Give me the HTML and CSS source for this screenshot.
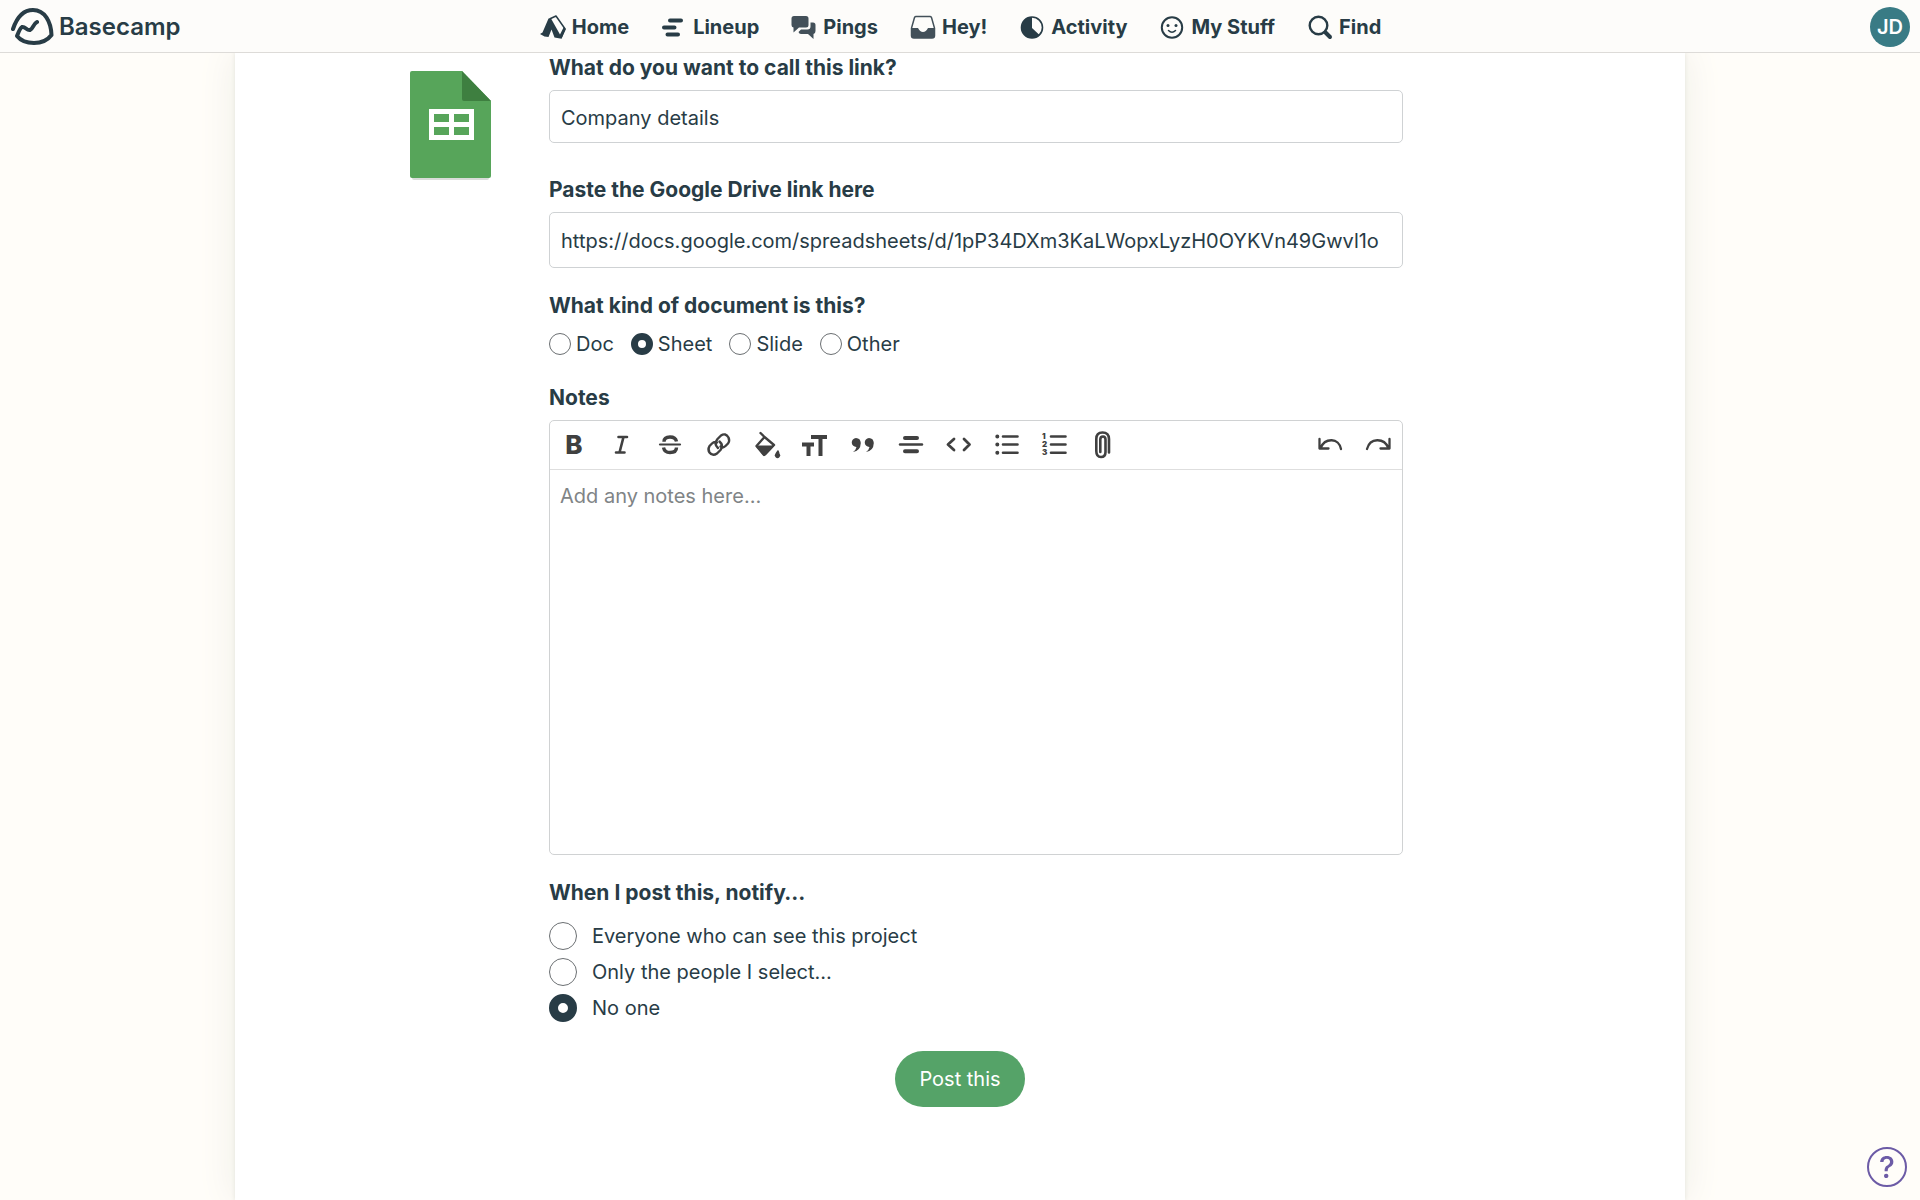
FILE: index.html
```html
<!DOCTYPE html>
<html lang="en">
<head>
<meta charset="utf-8">
<title>Basecamp</title>
<meta name="viewport" content="width=device-width, initial-scale=1">
<link rel="stylesheet" href="styles.css">
</head>
<body>
<header class="topbar">
  <a class="logo" href="#">
    <svg width="44" height="40" viewBox="11 7 44 40" fill="none" stroke="currentColor" stroke-width="4" stroke-linecap="round" stroke-linejoin="round" aria-hidden="true"><path d="M13 29C17 17 24 10 33 10C45 10 51 22 51.500 35C47 41 41 43 34 43C27 43 21 41 17 36C18.500 32 20 28 22 27C25 26 27 31 30 30C33 29 33 24 37 22"/></svg>
    <span>Basecamp</span>
  </a>
  <nav class="nav" aria-label="Main">
    <a href="#"><svg width="26" height="26" viewBox="0 0 26 26" aria-hidden="true"><path fill="none" stroke="currentColor" stroke-width="1.500" stroke-linejoin="round" d="M9.500 5L16 2L24.800 14.500L21 24"/><path fill="currentColor" d="M8.500 4.500L11 4.500L20 20.500L23.800 13L26 15L21.500 24.800L14.500 23.500L11.500 15.500L8.500 23L4.500 22.500L0 20L2.500 18.500Z"/></svg>Home</a>
    <a href="#"><svg width="26" height="26" viewBox="0 0 26 26" stroke="currentColor" stroke-width="4" stroke-linecap="round" aria-hidden="true"><path d="M9 6.500H20M3 13.500H13.500M6.500 20.500H17"/></svg>Lineup</a>
    <a href="#"><svg width="26" height="26" viewBox="0 0 26 26" fill="#435059" aria-hidden="true"><path d="M3 2H15Q17.500 2 17.500 4.500V11Q17.500 13.500 15 13.500H8L2.500 18.500V13.500Q0.500 13 0.500 11V4.500Q0.500 2 3 2Z"/><path d="M19.500 8.500H22Q24.500 8.500 24.500 11V17Q24.500 19.500 22.500 20V25L17 20H10Q8 20 7.500 18L10 15.500H16.500Q19.500 15.500 19.500 12.500Z"/></svg>Pings</a>
    <a href="#"><svg width="26" height="26" viewBox="0 0 26 26" aria-hidden="true"><path d="M6 2.500H20Q21 2.500 21.500 3.500L24.500 14V21.500Q24.500 24 22 24H4Q1.500 24 1.500 21.500V14L4.500 3.500Q5 2.500 6 2.500Z" fill="none" stroke="#435059" stroke-width="1.500"/><path fill="#435059" d="M1.500 14H8Q10 18 13 18Q16 18 18 14H24.500V21.500Q24.500 24 22 24H4Q1.500 24 1.500 21.500Z"/></svg>Hey!</a>
    <a href="#"><svg width="26" height="26" viewBox="0 0 26 26" aria-hidden="true"><circle cx="13" cy="13.500" r="10.500" fill="none" stroke="currentColor" stroke-width="1.600"/><path fill="currentColor" d="M13 3A10.500 10.500 0 1 0 20.500 21L13 14Z"/></svg>Activity</a>
    <a href="#"><svg width="26" height="26" viewBox="0 0 26 26" fill="none" stroke="currentColor" stroke-width="2" stroke-linecap="round" aria-hidden="true"><circle cx="13" cy="13.500" r="10.200"/><path d="M9.500 16.500Q13 20 16.500 16.500" stroke-width="1.500"/><circle cx="9" cy="11.500" r="1.500" fill="currentColor" stroke="none"/><circle cx="17" cy="11.500" r="1.500" fill="currentColor" stroke="none"/></svg>My Stuff</a>
    <a href="#"><svg width="26" height="26" viewBox="0 0 26 26" fill="none" stroke="currentColor" stroke-linecap="round" aria-hidden="true"><circle cx="11.500" cy="11.500" r="8.800" stroke-width="2.400"/><path d="M18.500 18.500L23 23" stroke-width="4"/></svg>Find</a>
  </nav>
  <button class="avatar" type="button" aria-label="Account">JD</button>
</header>

<main class="sheet">
  <form class="doc-form">
    <svg class="doc-icon" width="82" height="110" viewBox="0 0 82 110" aria-hidden="true">
      <path fill="#d9dcd9" d="M2 40H79V107Q79 109 77 109H4Q2 109 2 107Z"/>
      <path fill="#57a55a" d="M2 0H52L81 30V105Q81 107 79 107H2Q0 107 0 105V2Q0 0 2 0Z"/>
      <path fill="#3e7f40" d="M52 0L81 30H54Q52 30 52 28Z"/>
      <path fill="#fff" fill-rule="evenodd" d="M19 38H64V69H19ZM24 43V51H39V43ZM44 43V51H59V43ZM24 56V64H39V56ZM44 56V64H59V56Z"/>
    </svg>
    <div class="fields">
      <div class="field name-field">
        <label class="heading" for="link-name">What do you want to call this link?</label>
        <input class="text-input" id="link-name" type="text" value="Company details">
      </div>
      <div class="field link-field">
        <label class="heading" for="link-url">Paste the Google Drive link here</label>
        <input class="text-input tall" id="link-url" type="text" value="https://docs.google.com/spreadsheets/d/1pP34DXm3KaLWopxLyzH0OYKVn49Gwvl1o">
      </div>
      <fieldset class="kind">
        <legend class="heading">What kind of document is this?</legend>
        <div class="kind-options">
          <label><input class="radio" type="radio" name="kind">Doc</label>
          <label><input class="radio" type="radio" name="kind" checked>Sheet</label>
          <label><input class="radio" type="radio" name="kind">Slide</label>
          <label><input class="radio" type="radio" name="kind">Other</label>
        </div>
      </fieldset>
      <div class="field">
        <label class="heading" for="notes">Notes</label>
        <div class="editor">
          <div class="toolbar">
            <button type="button" class="bold-tool" aria-label="Bold">B</button>
            <button type="button" aria-label="Italic"><svg viewBox="0 0 48 48"><path d="M20.500 16H29M18 31.500H26.500M25.500 16L21.500 31.500" stroke-width="2.600"/></svg></button>
            <button type="button" aria-label="Strikethrough"><svg viewBox="0 0 48 48"><path d="M14 23.500H34" stroke-width="2.200"/><path d="M30.500 20.500Q29.500 16 24 16Q18 16 18 20.800M17.500 26.500Q18.500 31.500 24 31.500Q30.500 31.500 30.500 26.500" stroke-width="3.400" stroke-linecap="butt"/></svg></button>
            <button type="button" aria-label="Link"><svg viewBox="0 0 48 48"><path d="M26.500 25.500Q29 27.500 31.500 25L34 22.500Q36 20 34.500 16.500Q31.500 11.500 27 14.500L23.500 18Q19.500 23 24 27M23 21.500Q20.500 20 18 22.500L15.500 25Q13.500 28.500 15.500 31.500Q18.500 35.500 23 32.500L26.500 29Q30 24.500 25.500 20.500" stroke-width="2.400"/></svg></button>
            <button type="button" aria-label="Color"><svg viewBox="0 0 48 48"><path d="M18.500 12L22.500 16L32 24L22 34L14.500 25L22.500 16" stroke-width="2.400"/><path d="M14.500 25H32L23.500 34Q22.500 35 21.500 34Z" fill="currentColor"/><path d="M36 30L34 33A2 2 0 1 0 37 33Z" fill="currentColor" stroke-width="1.500"/></svg></button>
            <button type="button" aria-label="Text size"><svg viewBox="0 0 48 48"><path d="M21 16H37M30.500 16V35M12 23.500H24M18.500 23.500V35" stroke-width="4" stroke-linecap="butt"/></svg></button>
            <button type="button" aria-label="Quote"><svg viewBox="0 0 48 48"><path id="quote-mark" stroke="none" fill="currentColor" d="M18 17A4.500 4.500 0 1 0 18.500 26Q18 29 15 31Q22.500 30 22.800 22Q22.500 17.200 18 17Z"/><use href="#quote-mark" x="13"/></svg></button>
            <button type="button" aria-label="Divider"><svg viewBox="0 0 48 48"><path d="M14 23.500H36" stroke-width="2.400"/><path d="M19 17H31M19 30.300H31" stroke-width="4"/></svg></button>
            <button type="button" aria-label="Code"><svg viewBox="0 0 48 48"><path d="M20 18L14 23.500L20 29M30 18L35.500 23.500L30 29" stroke-width="2.800"/></svg></button>
            <button type="button" aria-label="Bulleted list"><svg viewBox="0 0 48 48"><path d="M21 15.500H35.500M21 23.500H35.500M21 31.700H35.500" stroke-width="2.600"/><path d="M15.300 15.500V15.600M15.300 23.500V23.600M15.300 31.700V31.800" stroke-width="4"/></svg></button>
            <button type="button" aria-label="Numbered list"><svg viewBox="0 0 48 48"><path d="M21 15.500H35.500M21 23.500H35.500M21 31.700H35.500" stroke-width="2.600"/><g class="list-digits"><text x="12" y="18">1</text><text x="12" y="26">2</text><text x="12" y="34">3</text></g></svg></button>
            <button type="button" aria-label="Attach a file"><svg viewBox="0 0 48 48"><path d="M31 31.500V18Q31 11.500 24.500 11.500Q18.300 11.500 18.300 18V30Q18.300 36 23 36Q27.500 36 27.500 31V18.500Q27.500 15.500 25 15.500Q22.300 15.500 22.300 18.500V31" stroke-width="2.600"/></svg></button>
            <span class="toolbar-space"></span>
            <button type="button" aria-label="Undo"><svg viewBox="0 0 48 48"><path d="M13.500 18V27.500H22.500M14.500 27C19 16.500 33 16.500 35 28" stroke-width="2.300"/></svg></button>
            <button type="button" aria-label="Redo"><svg viewBox="0 0 48 48"><path d="M35.500 18V27.500H26.500M34.500 27C30 16.500 16 16.500 13 28" stroke-width="2.300"/></svg></button>
          </div>
          <textarea class="notes" id="notes" placeholder="Add any notes here…"></textarea>
        </div>
      </div>
      <fieldset class="notify">
        <legend class="heading">When I post this, notify…</legend>
        <div class="notify-options">
          <label><input class="radio large" type="radio" name="notify">Everyone who can see this project</label>
          <label><input class="radio large" type="radio" name="notify">Only the people I select…</label>
          <label><input class="radio large" type="radio" name="notify" checked>No one</label>
        </div>
      </fieldset>
    </div>
    <button class="submit" type="submit">Post this</button>
  </form>
</main>
<button class="help" type="button" aria-label="Help">?</button>
</body>
</html>
```
FILE: styles.css
```css
* { box-sizing: border-box; }

body {
  margin: 0;
  min-height: 100vh;
  display: flex;
  flex-direction: column;
  background: #fffdf9;
  color: #283c46;
  font: 20px/28px Inter, "Liberation Sans", sans-serif;
}

button, input, textarea { font: inherit; color: inherit; }
button { padding: 0; border: 0; background: none; cursor: pointer; }

/* Top bar */
.topbar {
  position: sticky;
  top: 0;
  z-index: 2;
  display: grid;
  grid-template-columns: 1fr auto 1fr;
  align-items: center;
  height: 53px;
  padding: 1px 10px 0 11px;
  background: #fdfcfa;
  border-bottom: 1px solid #dddbd8;
}
.topbar a { color: inherit; text-decoration: none; }
.logo {
  display: flex;
  align-items: center;
  gap: 4px;
  font-size: 24px;
  font-weight: 600;
}
.nav { display: flex; gap: 32px; font-weight: 700; }
.nav a { display: flex; align-items: center; gap: 6px; }
.avatar {
  justify-self: end;
  width: 40px;
  height: 40px;
  border-radius: 50%;
  background: #397b85;
  color: #fff;
  font-weight: 600;
}

/* Page sheet */
.sheet {
  flex: 1;
  width: 100%;
  max-width: 1450px;
  margin: 0 auto;
  padding: 1px 175px 92px;
  background: #fff;
  box-shadow: 0 0 4px #e4e4dc, 0 0 36px #eeeee6;
}
.doc-form {
  display: grid;
  grid-template-columns: 82px minmax(0, 1fr);
  column-gap: 57px;
}
.doc-icon { margin-top: 17px; }
.fields { margin-right: 107px; }
.heading { display: block; padding: 0; font-size: 21px; font-weight: 700; }
fieldset { min-width: 0; margin: 0; padding: 0; border: 0; }

.field { display: flex; flex-direction: column; gap: 8px; }
.name-field { margin-bottom: 33px; }
.link-field { margin-bottom: 24px; }
.text-input {
  width: 100%;
  height: 53px;
  padding: 2px 11px 0;
  border: 1px solid #cfd2d4;
  border-radius: 5px;
  background: #fff;
}
.text-input.tall { height: 56px; }

.radio {
  appearance: none;
  flex: none;
  width: 22px;
  height: 22px;
  margin: 0;
  border: 1px solid #6b6f72;
  border-radius: 50%;
  background: #fff;
}
.radio:checked { border: 7px solid #283c46; }
.radio.large { width: 28px; height: 28px; }
.radio.large:checked { border-width: 9px; }

.kind { margin-bottom: 26px; }
.kind-options { display: flex; gap: 17px; padding-top: 10px; }
.kind-options label { display: flex; align-items: center; gap: 5px; }

/* Notes editor */
.editor { border: 1px solid #d0d2d3; border-radius: 5px; background: #fff; }
.toolbar {
  display: flex;
  height: 49px;
  border-bottom: 1px solid #dedede;
  color: #404040;
}
.toolbar button { width: 48px; height: 48px; }
.toolbar svg {
  display: block;
  width: 48px;
  height: 48px;
  fill: none;
  stroke: currentColor;
  stroke-linecap: round;
  stroke-linejoin: round;
}
.toolbar .bold-tool { font-size: 26px; font-weight: 800; }
.list-digits { fill: currentColor; stroke: none; font-size: 8px; font-weight: 900; }
.toolbar-space { flex: 1; }
.notes {
  display: block;
  width: 100%;
  height: 384px;
  padding: 12px 10px;
  border: 0;
  background: none;
  resize: none;
}
.notes::placeholder { color: #808486; opacity: 1; }

.notify { margin-top: 24px; }
.notify-options { display: flex; flex-direction: column; gap: 8px; padding-top: 15px; }
.notify-options label { display: flex; align-items: center; gap: 15px; }

.submit {
  grid-column: 1 / -1;
  justify-self: center;
  height: 56px;
  margin-top: 29px;
  padding: 0 24px;
  border-radius: 28px;
  background: #55a368;
  color: #fff;
}

.help {
  position: fixed;
  right: 13px;
  bottom: 13px;
  width: 40px;
  height: 40px;
  border: 2px solid #6c5ba6;
  border-radius: 50%;
  color: #6c5ba6;
  font-size: 30px;
  font-weight: 500;
}
```
